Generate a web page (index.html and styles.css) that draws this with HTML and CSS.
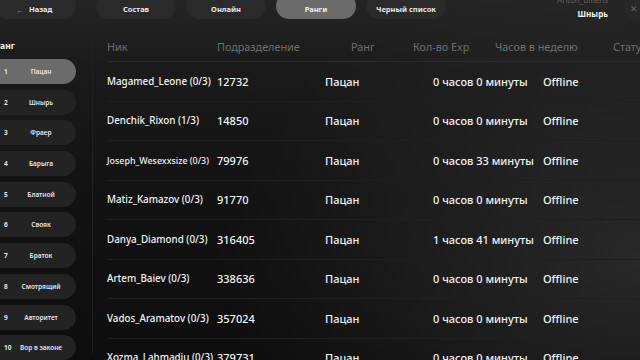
FILE: index.html
```html
<!DOCTYPE html>
<html lang="ru">
<head>
<meta charset="utf-8">
<link rel="stylesheet" href="styles.css">
</head>
<body>
<div class="page">
  <header class="topbar">
    <div class="tabs">
      <div class="pill back"><span class="arrow">←</span>Назад</div>
      <div class="pill first">Состав</div>
      <div class="pill">Онлайн</div>
      <div class="pill active">Ранги</div>
      <div class="pill">Черный список</div>
    </div>
    <div class="user">
      <div class="user-info">
        <div class="user-name">Anton_Billens</div>
        <div class="user-rank">Шнырь</div>
      </div>
      <div class="close">✕</div>
    </div>
  </header>
  <div class="main">
    <aside class="sidebar">
      <div class="side-title">Ранг</div>
      <div class="rank-list">
        <div class="rank active"><span class="num">1</span><span class="label">Пацан</span></div>
        <div class="rank"><span class="num">2</span><span class="label">Шнырь</span></div>
        <div class="rank"><span class="num">3</span><span class="label">Фраер</span></div>
        <div class="rank"><span class="num">4</span><span class="label">Барыга</span></div>
        <div class="rank"><span class="num">5</span><span class="label">Блатной</span></div>
        <div class="rank"><span class="num">6</span><span class="label">Свояк</span></div>
        <div class="rank"><span class="num">7</span><span class="label">Браток</span></div>
        <div class="rank"><span class="num">8</span><span class="label">Смотрящий</span></div>
        <div class="rank"><span class="num">9</span><span class="label">Авторитет</span></div>
        <div class="rank"><span class="num">10</span><span class="label">Вор в законе</span></div>
      </div>
    </aside>
    <section class="table">
      <div class="thead">
        <span>Ник</span>
        <span>Подразделение</span>
        <span>Ранг</span>
        <span>Кол-во Exp</span>
        <span>Часов в неделю</span>
        <span>Статус</span>
      </div>
      <div class="row"><span class="nick">Magamed_Leone (0/3)</span><span>12732</span><span>Пацан</span><span>0 часов 0 минуты</span><span>Offline</span></div>
      <div class="row"><span class="nick">Denchik_Rixon (1/3)</span><span>14850</span><span>Пацан</span><span>0 часов 0 минуты</span><span>Offline</span></div>
      <div class="row"><span class="nick small">Joseph_Wesexxsize (0/3)</span><span>79976</span><span>Пацан</span><span>0 часов 33 минуты</span><span>Offline</span></div>
      <div class="row"><span class="nick">Matiz_Kamazov (0/3)</span><span>91770</span><span>Пацан</span><span>0 часов 0 минуты</span><span>Offline</span></div>
      <div class="row"><span class="nick">Danya_Diamond (0/3)</span><span>316405</span><span>Пацан</span><span>1 часов 41 минуты</span><span>Offline</span></div>
      <div class="row"><span class="nick">Artem_Baiev (0/3)</span><span>338636</span><span>Пацан</span><span>0 часов 0 минуты</span><span>Offline</span></div>
      <div class="row"><span class="nick">Vados_Aramatov (0/3)</span><span>357024</span><span>Пацан</span><span>0 часов 0 минуты</span><span>Offline</span></div>
      <div class="row"><span class="nick">Xozma_Lahmadiu (0/3)</span><span>379731</span><span>Пацан</span><span>0 часов 0 минуты</span><span>Offline</span></div>
    </section>
  </div>
</div>
</body>
</html>
```

FILE: styles.css
```css
* { box-sizing: border-box; }
html, body {
  margin: 0;
  padding: 0;
  width: 640px;
  height: 360px;
  overflow: hidden;
}
body {
  font-family: "Noto Sans", "Open Sans", sans-serif;
  color: #fff;
  background:
    radial-gradient(ellipse 420px 300px at 640px 260px, rgba(60,60,60,0.55), rgba(60,60,60,0) 100%),
    linear-gradient(180deg, #242424 0px, #1a1a1a 70px, #121212 200px, #0d0d0d 360px);
}
.page {
  width: 640px;
  height: 360px;
  overflow: hidden;
}
.topbar {
  display: flex;
  justify-content: space-between;
  align-items: flex-start;
  margin-top: -7px;
  height: 47px;
}
.tabs {
  display: flex;
  gap: 10px;
  margin-left: -6px;
}
.pill {
  width: 80px;
  height: 26px;
  border-radius: 13px;
  background: #2a2a2a;
  display: flex;
  align-items: center;
  justify-content: center;
  font-size: 7.5px;
  font-weight: 700;
  color: #e8e8e8;
  padding-top: 6px;
}
.pill.back {
  width: 82px;
  justify-content: flex-start;
  padding-left: 22px;
}
.pill.first { margin-left: 10px; }
.arrow {
  color: #9a9a9a;
  margin-right: 5px;
  font-size: 8px;
}
.pill.active {
  background: #6b6b6b;
  color: #f0f0f0;
}
.user {
  display: flex;
  align-items: flex-start;
  gap: 16px;
  margin-right: -12px;
}
.user-info {
  text-align: right;
  padding-top: 2px;
}
.user-name {
  font-size: 8px;
  color: #5e5e5e;
  line-height: 10px;
}
.user-rank {
  font-size: 8px;
  font-weight: 700;
  color: #f2f2f2;
  line-height: 12px;
  margin-top: 3px;
}
.close {
  width: 28px;
  height: 27px;
  border-radius: 50%;
  background: #282828;
  color: #666;
  font-size: 9px;
  padding-top: 9px;
  padding-left: 6px;
}
.main {
  display: flex;
  height: 313px;
}
.sidebar {
  width: 93px;
  border-right: 1px solid #202020;
  flex-shrink: 0;
}
.side-title {
  margin-left: -5px;
  font-size: 8.5px;
  font-weight: 700;
  color: #f4f4f4;
  height: 19px;
  line-height: 12px;
}
.rank-list {
  display: flex;
  flex-direction: column;
  gap: 5.7px;
  margin-left: -12px;
}
.rank {
  width: 88px;
  height: 25px;
  border-radius: 12.5px;
  background: #232323;
  display: flex;
  align-items: center;
  font-size: 6.5px;
  font-weight: 600;
  color: #e4e4e4;
}
.rank.active { background: #6b6b6b; }
.num {
  width: 24px;
  padding-left: 16px;
  font-weight: 700;
  flex-shrink: 0;
}
.label {
  flex: 1;
  text-align: center;
  padding-right: 6px;
}
.table {
  flex: 1;
  padding-left: 14px;
}
.thead {
  display: grid;
  grid-template-columns: 110px 134px 62px 82px 118px auto;
  font-size: 10.8px;
  color: #6e6e6e;
  height: 22px;
  line-height: 14px;
  border-bottom: 1px solid #2b2b2b;
  margin-right: -20px;
  white-space: nowrap;
}
.row {
  display: grid;
  grid-template-columns: 110px 108px 108px 110px auto;
  align-items: center;
  height: 39.5px;
  border-bottom: 1px solid #1f1f1f;
  font-size: 11px;
  font-weight: 500;
  color: #f2f2f2;
  white-space: nowrap;
  margin-right: -20px;
}
.row .nick { font-size: 9.8px; }
.row .nick.small { font-size: 8.9px; }
```
